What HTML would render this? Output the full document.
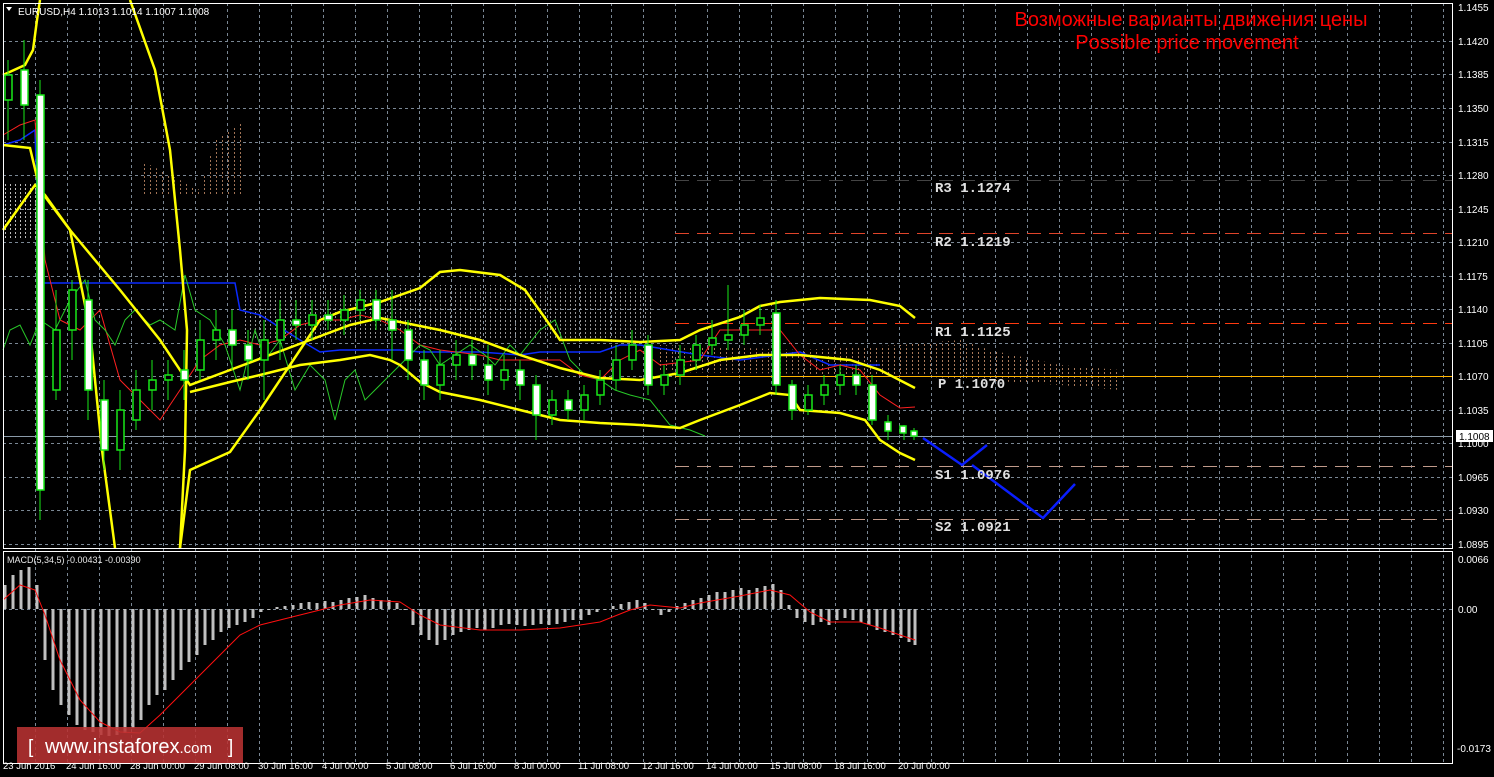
<!DOCTYPE html>
<html><head><meta charset="utf-8"><style>
html,body{margin:0;padding:0;background:#000;width:1494px;height:777px;overflow:hidden}
svg{display:block}
text{font-family:"Liberation Sans",sans-serif}
text.mono{font-family:"Liberation Mono",monospace;font-weight:bold;font-size:14px}
</style></head><body>
<svg width="1494" height="777" viewBox="0 0 1494 777" xmlns="http://www.w3.org/2000/svg">
<defs>
<pattern id="vd" width="5" height="4" patternUnits="userSpaceOnUse"><rect x="0" y="0" width="1" height="2" fill="#bbb"/></pattern>
<pattern id="vo" width="6" height="4" patternUnits="userSpaceOnUse"><rect x="0" y="0" width="1" height="2" fill="#c8906a"/></pattern>
</defs>
<rect width="1494" height="777" fill="#000"/>
<g stroke="#7a8794" stroke-width="1" stroke-dasharray="3,3" fill="none">
<path d="M3 41.5H1452M3 74.5H1452M3 108.5H1452M3 142.5H1452M3 175.5H1452M3 209.5H1452M3 242.5H1452M3 276.5H1452M3 309.5H1452M3 343.5H1452M3 376.5H1452M3 410.5H1452M3 443.5H1452M3 477.5H1452M3 510.5H1452M3 544.5H1452M3 609.5H1452"/>
<path d="M35.5 3V763M67.5 3V763M99.5 3V763M131.5 3V763M163.5 3V763M195.5 3V763M227.5 3V763M259.5 3V763M291.5 3V763M323.5 3V763M355.5 3V763M387.5 3V763M419.5 3V763M451.5 3V763M483.5 3V763M515.5 3V763M547.5 3V763M579.5 3V763M611.5 3V763M643.5 3V763M675.5 3V763M707.5 3V763M739.5 3V763M771.5 3V763M803.5 3V763M835.5 3V763M867.5 3V763M899.5 3V763M931.5 3V763M963.5 3V763M995.5 3V763M1027.5 3V763M1059.5 3V763M1091.5 3V763M1123.5 3V763M1155.5 3V763M1187.5 3V763M1219.5 3V763M1251.5 3V763M1283.5 3V763M1315.5 3V763M1347.5 3V763M1379.5 3V763M1411.5 3V763M1443.5 3V763"/>
</g>
<polygon points="3,182 40,182 40,240 3,240" fill="url(#vd)"/>
<polygon points="140,160 200,190 215,140 245,120 245,195 140,195" fill="url(#vo)" opacity="0.8"/>
<polygon points="245,285 650,285 655,340 245,340" fill="url(#vd)" opacity="0.8"/>
<polygon points="660,345 800,350 900,345 960,340 990,350 1060,365 1120,370 1120,390 1060,385 900,375 660,372" fill="url(#vo)" opacity="0.85"/>
<path d="M675 180.5H1452" stroke="#444" stroke-dasharray="14,8"/>
<path d="M675 233.5H1452" stroke="#e0442a" stroke-dasharray="14,8"/>
<path d="M675 323.5H1452" stroke="#ff3a10" stroke-dasharray="14,8"/>
<path d="M675 376.5H1452" stroke="#ffb400"/>
<path d="M675 466.5H1452" stroke="#c09a8a" stroke-dasharray="14,8"/>
<path d="M675 519.5H1452" stroke="#c09a8a" stroke-dasharray="14,8"/>
<path d="M3 436.5H1452" stroke="#8a9aa8"/>
<polyline fill="none" stroke="#0a2aff" stroke-width="1.5" points="3,145 20,140 35,130 40,283 235,283 240,310 260,315 300,340 320,352 340,350 400,350 420,352 480,352 520,355 540,352 600,352 620,345 640,345 700,355 740,360 800,352 830,365 880,365"/>
<polyline fill="none" stroke="#ff2020" stroke-width="1" points="3,135 20,125 35,120 45,260 60,320 80,330 100,310 120,380 140,400 160,420 180,390 200,360 220,345 240,340 260,345 280,340 300,325 320,320 340,320 360,315 380,320 400,330 420,345 440,350 480,355 500,360 520,360 540,360 560,360 580,375 600,380 620,360 640,350 660,365 700,360 720,330 740,330 760,330 780,330 800,355 820,370 840,365 860,370 880,395 900,408 915,407"/>
<polyline fill="none" stroke="#28c828" stroke-width="1" points="3,350 10,330 20,325 30,345 40,320 55,330 70,300 85,280 95,320 105,330 115,345 125,320 135,310 150,325 160,320 175,330 185,275 195,310 210,320 225,345 240,390 255,330 265,360 280,340 295,390 310,365 325,380 335,420 345,380 355,370 365,400 375,390 390,375 405,360 420,345 430,350 440,365 455,355 470,345 485,355 495,365 510,345 520,355 540,330 555,320 570,360 585,375 600,380 615,390 630,395 650,400 670,425 690,430 705,436"/>
<g fill="none" stroke="#ffff00" stroke-width="2.5">
<polyline points="3,75 25,65 33,50 37,20 40,0"/>
<polyline points="3,145 30,148 40,190 70,230 90,330 102,450 115,548"/>
<polyline points="130,0 155,70 170,150 180,250 187,330 185,450 180,548"/>
<polyline points="3,230 35,185 45,195 70,230 120,290 160,340 190,385 230,370 270,355 310,340 350,325 380,318 400,322 440,330 480,340 520,355 560,368 600,378 640,380 680,373 720,360 760,355 800,355 850,360 880,370 915,388"/>
<polyline points="180,548 190,470 230,452 260,410 300,350 320,320 340,312 380,302 420,288 440,272 460,270 500,275 525,290 545,318 560,340 600,340 640,342 680,340 700,330 740,317 760,306 780,302 820,298 870,300 900,306 915,318"/>
<polyline points="190,392 230,382 260,375 300,365 340,360 370,355 390,360 400,365 420,382 440,392 480,400 520,410 560,420 600,423 640,425 680,428 700,420 740,405 770,393 790,395 800,410 840,413 865,420 880,440 900,453 915,460"/>
</g>
<g stroke="#18e818" stroke-width="1">
<path d="M8 60V140M24 40V140M40 80V520M56 290V400M72 280V360M88 280V420M104 380V470M120 390V470M136 370V430M152 360V410M168 360V400M184 350V400M200 320V380M216 310V360M232 310V370M248 330V380M264 320V400M280 300V360M296 300V340M312 300V340M328 300V330M344 295V335M360 290V320M376 290V330M392 290V360M408 320V380M424 350V400M440 350V400M456 340V380M472 340V380M488 345V395M504 355V390M520 360V400M536 375V440M552 390V425M568 390V420M584 385V420M600 370V405M616 345V390M632 330V370M648 335V395M664 365V395M680 345V385M696 335V370M712 320V355M728 285V350M744 310V345M760 305V335M776 300V395M792 380V420M808 385V415M824 375V405M840 365V395M856 365V395M872 375V425M888 415V440M904 425V440M914 428V440"/>
</g>
<g stroke="#18e818" stroke-width="1.5">
<rect x="5" y="75" width="7" height="25" fill="#000"/>
<rect x="21" y="70" width="7" height="35" fill="#fff"/>
<rect x="37" y="95" width="7" height="395" fill="#fff"/>
<rect x="53" y="330" width="7" height="60" fill="#000"/>
<rect x="69" y="290" width="7" height="40" fill="#000"/>
<rect x="85" y="300" width="7" height="90" fill="#fff"/>
<rect x="101" y="400" width="7" height="50" fill="#fff"/>
<rect x="117" y="410" width="7" height="40" fill="#000"/>
<rect x="133" y="390" width="7" height="30" fill="#000"/>
<rect x="149" y="380" width="7" height="10" fill="#000"/>
<rect x="165" y="375" width="7" height="5" fill="#000"/>
<rect x="181" y="370" width="7" height="10" fill="#fff"/>
<rect x="197" y="340" width="7" height="30" fill="#000"/>
<rect x="213" y="330" width="7" height="10" fill="#000"/>
<rect x="229" y="330" width="7" height="15" fill="#fff"/>
<rect x="245" y="345" width="7" height="15" fill="#fff"/>
<rect x="261" y="340" width="7" height="20" fill="#000"/>
<rect x="277" y="320" width="7" height="20" fill="#000"/>
<rect x="293" y="320" width="7" height="5" fill="#fff"/>
<rect x="309" y="315" width="7" height="10" fill="#000"/>
<rect x="325" y="315" width="7" height="5" fill="#fff"/>
<rect x="341" y="310" width="7" height="10" fill="#000"/>
<rect x="357" y="300" width="7" height="10" fill="#000"/>
<rect x="373" y="300" width="7" height="20" fill="#fff"/>
<rect x="389" y="320" width="7" height="10" fill="#fff"/>
<rect x="405" y="330" width="7" height="30" fill="#fff"/>
<rect x="421" y="360" width="7" height="25" fill="#fff"/>
<rect x="437" y="365" width="7" height="20" fill="#000"/>
<rect x="453" y="355" width="7" height="10" fill="#000"/>
<rect x="469" y="355" width="7" height="10" fill="#fff"/>
<rect x="485" y="365" width="7" height="15" fill="#fff"/>
<rect x="501" y="370" width="7" height="10" fill="#000"/>
<rect x="517" y="370" width="7" height="15" fill="#fff"/>
<rect x="533" y="385" width="7" height="30" fill="#fff"/>
<rect x="549" y="400" width="7" height="15" fill="#000"/>
<rect x="565" y="400" width="7" height="10" fill="#fff"/>
<rect x="581" y="395" width="7" height="15" fill="#000"/>
<rect x="597" y="380" width="7" height="15" fill="#000"/>
<rect x="613" y="360" width="7" height="20" fill="#000"/>
<rect x="629" y="345" width="7" height="15" fill="#000"/>
<rect x="645" y="345" width="7" height="40" fill="#fff"/>
<rect x="661" y="375" width="7" height="10" fill="#000"/>
<rect x="677" y="360" width="7" height="15" fill="#000"/>
<rect x="693" y="345" width="7" height="15" fill="#000"/>
<rect x="709" y="338" width="7" height="7" fill="#000"/>
<rect x="725" y="335" width="7" height="5" fill="#000"/>
<rect x="741" y="325" width="7" height="10" fill="#000"/>
<rect x="757" y="318" width="7" height="7" fill="#000"/>
<rect x="773" y="313" width="7" height="72" fill="#fff"/>
<rect x="789" y="385" width="7" height="25" fill="#fff"/>
<rect x="805" y="395" width="7" height="15" fill="#000"/>
<rect x="821" y="385" width="7" height="10" fill="#000"/>
<rect x="837" y="375" width="7" height="10" fill="#000"/>
<rect x="853" y="375" width="7" height="10" fill="#fff"/>
<rect x="869" y="385" width="7" height="35" fill="#fff"/>
<rect x="885" y="422" width="6" height="9" fill="#fff"/>
<rect x="900" y="426" width="6" height="7" fill="#fff"/>
<rect x="911" y="431" width="6" height="5" fill="#fff"/>
</g>
<polyline fill="none" stroke="#0a1eff" stroke-width="2.5" points="923,438 962,465 987,445"/>
<polyline fill="none" stroke="#0a1eff" stroke-width="2.5" points="972,465 1043,518 1075,484"/>
<g fill="#e0e0e0">
<text class="mono" x="935" y="192">R3 1.1274</text>
<text class="mono" x="935" y="246">R2 1.1219</text>
<text class="mono" x="935" y="336">R1 1.1125</text>
<text class="mono" x="938" y="388">P 1.1070</text>
<text class="mono" x="935" y="479">S1 1.0976</text>
<text class="mono" x="935" y="531">S2 1.0921</text>
</g>
<text x="1191" y="26" fill="#ff0000" font-size="20" text-anchor="middle">Возможные варианты движения цены</text>
<text x="1187" y="49" fill="#ff0000" font-size="20" text-anchor="middle">Possible price movement</text>
<path d="M6 7L12 7L9 11Z" fill="#fff"/>
<text x="18" y="15" fill="#fff" font-size="10">EURUSD,H4  1.1013 1.1014 1.1007 1.1008</text>
<g stroke="#c0c0c0" stroke-width="3">
<path d="M5 609V585M13 609V575M21 609V570M29 609V567M37 609V585M45 609V660M53 609V690M61 609V705M69 609V715M77 609V725M85 609V730M93 609V732M101 609V735M109 609V736M117 609V735M125 609V733M133 609V728M141 609V720M149 609V705M157 609V695M165 609V690M173 609V680M181 609V670M189 609V662M197 609V655M205 609V645M213 609V640M221 609V632M229 609V628M237 609V625M245 609V622M253 609V618M261 609V612M269 609V610M277 609V607M285 609V606M293 609V605M301 609V603M309 609V602M317 609V603M325 609V601M333 609V602M341 609V600M349 609V598M357 609V597M365 609V595M373 609V598M381 609V600M389 609V600M397 609V603M405 609V610M413 609V625M421 609V635M429 609V640M437 609V645M445 609V640M453 609V635M461 609V632M469 609V630M477 609V628M485 609V630M493 609V628M501 609V625M509 609V624M517 609V625M525 609V626M533 609V625M541 609V624M549 609V625M557 609V624M565 609V622M573 609V620M581 609V620M589 609V615M597 609V612M605 609V610M613 609V606M621 609V604M629 609V602M637 609V600M645 609V603M653 609V610M661 609V615M669 609V612M677 609V606M685 609V603M693 609V600M701 609V598M709 609V595M717 609V592M725 609V592M733 609V590M741 609V588M749 609V590M757 609V588M765 609V586M773 609V584M781 609V590M789 609V605M797 609V618M805 609V622M813 609V625M821 609V622M829 609V625M837 609V620M845 609V618M853 609V620M861 609V622M869 609V625M877 609V630M885 609V632M893 609V635M901 609V638M909 609V642M915 609V645"/>
</g>
<polyline fill="none" stroke="#ff1010" stroke-width="1" points="3,600 20,585 35,590 45,615 60,660 80,700 100,722 120,732 140,733 160,715 180,695 200,675 220,655 240,635 260,625 300,615 340,605 370,600 400,602 420,615 440,625 480,630 520,630 560,628 600,622 630,610 650,605 680,608 700,603 740,596 770,590 790,595 810,612 830,622 860,622 880,628 900,635 915,640"/>
<text x="7" y="563" fill="#e8e8e8" font-size="9">MACD(5,34,5) -0.00431 -0.00390</text>
<path d="M3.5 3.5H1452.5V548.5H3.5Z" fill="none" stroke="#fff"/>
<path d="M3.5 551.5H1452.5V763.5H3.5Z" fill="none" stroke="#fff"/>
<g fill="#fff" font-size="10">
<text x="1458" y="11">1.1455</text><text x="1458" y="45">1.1420</text><text x="1458" y="78">1.1385</text><text x="1458" y="112">1.1350</text><text x="1458" y="146">1.1315</text><text x="1458" y="179">1.1280</text><text x="1458" y="213">1.1245</text><text x="1458" y="246">1.1210</text><text x="1458" y="280">1.1175</text><text x="1458" y="313">1.1140</text><text x="1458" y="347">1.1105</text><text x="1458" y="380">1.1070</text><text x="1458" y="414">1.1035</text><text x="1458" y="447">1.1000</text><text x="1458" y="481">1.0965</text><text x="1458" y="514">1.0930</text><text x="1458" y="548">1.0895</text>
<text x="1458" y="563">0.0066</text><text x="1458" y="613">0.00</text><text x="1457" y="752">-0.0173</text>
</g>
<rect x="1456" y="430" width="37" height="12" fill="#fff"/>
<text x="1459" y="440" fill="#000" font-size="10">1.1008</text>
<g fill="#fff" font-size="9.5">
<text x="3" y="769">23 Jun 2016</text><text x="66" y="769">24 Jun 16:00</text><text x="130" y="769">28 Jun 00:00</text><text x="194" y="769">29 Jun 08:00</text><text x="258" y="769">30 Jun 16:00</text><text x="322" y="769">4 Jul 00:00</text><text x="386" y="769">5 Jul 08:00</text><text x="450" y="769">6 Jul 16:00</text><text x="514" y="769">8 Jul 00:00</text><text x="578" y="769">11 Jul 08:00</text><text x="642" y="769">12 Jul 16:00</text><text x="706" y="769">14 Jul 00:00</text><text x="770" y="769">15 Jul 08:00</text><text x="834" y="769">18 Jul 16:00</text><text x="898" y="769">20 Jul 00:00</text>
</g>
<rect x="17" y="727" width="226" height="36" fill="#b83232" opacity="0.88"/>
<text x="28" y="753" fill="#fff" font-size="19">[</text>
<text x="45" y="753" fill="#fff" font-size="20">www.instaforex<tspan font-size="15">.com</tspan></text>
<text x="228" y="753" fill="#fff" font-size="19">]</text>
</svg>
</body></html>
